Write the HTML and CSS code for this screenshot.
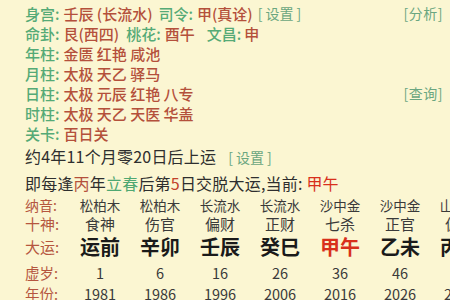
FILE: index.html
```html
<!DOCTYPE html>
<html lang="zh">
<head>
<meta charset="utf-8">
<link rel="stylesheet" href="styles.css">
</head>
<body>
<div class="page">
  <div class="info">
    <div class="line"><span class="lb">身宫:</span><span class="v">壬辰 (长流水)</span><span class="lb sp">司令:</span><span class="v">甲(真诠)</span><span class="link"><span class="bo">[</span>设置<span class="bc">]</span></span><span class="link right">[分析]</span></div>
    <div class="line"><span class="lb">命卦:</span><span class="v">艮(西四)</span><span class="lb sp2">桃花:</span><span class="v">酉午</span><span class="lb sp3">文昌:</span><span class="v">申</span></div>
    <div class="line"><span class="lb">年柱:</span><span class="v">金匮 红艳 咸池</span></div>
    <div class="line"><span class="lb">月柱:</span><span class="v">太极 天乙 驿马</span></div>
    <div class="line"><span class="lb">日柱:</span><span class="v">太极 元辰 红艳 八专</span><span class="link right">[查询]</span></div>
    <div class="line"><span class="lb">时柱:</span><span class="v">太极 天乙 天医 华盖</span></div>
    <div class="line"><span class="lb">关卡:</span><span class="v">百日关</span></div>
  </div>
  <div class="big">约4年11个月零20日后上运<span class="link sm"><span class="bo">[</span>设置<span class="bc">]</span></span></div>
  <div class="big">即每逢<span class="br">丙</span>年<span class="gr">立春</span>后第<span class="rd">5</span>日交脱大运,当前: <span class="cur">甲午</span></div>
  <div class="row r-ny">
    <span class="rl">纳音:</span><span>松柏木</span><span>松柏木</span><span>长流水</span><span>长流水</span><span>沙中金</span><span>沙中金</span><span>山下火</span>
  </div>
  <div class="row r-ss">
    <span class="rl">十神:</span><span>食神</span><span>伤官</span><span>偏财</span><span>正财</span><span>七杀</span><span>正官</span><span>偏印</span>
  </div>
  <div class="row r-dy">
    <span class="rl">大运:</span><span>运前</span><span>辛卯</span><span>壬辰</span><span>癸巳</span><span class="cur">甲午</span><span>乙未</span><span>丙申</span>
  </div>
  <div class="row r-xs">
    <span class="rl">虚岁:</span><span>1</span><span>6</span><span>16</span><span>26</span><span>36</span><span>46</span><span>56</span>
  </div>
  <div class="row r-nf">
    <span class="rl">年份:</span><span>1981</span><span>1986</span><span>1996</span><span>2006</span><span>2016</span><span>2026</span><span>2036</span>
  </div>
</div>
</body>
</html>
```

FILE: styles.css
```css
html, body {
  margin: 0;
  padding: 0;
  background: #fbf6d2;
  overflow: hidden;
}
body {
  width: 450px;
  height: 300px;
  font-family: "Noto Sans CJK SC", "Noto Sans", sans-serif;
}
.page {
  padding: 3px 0 0 25px;
}
.info .line {
  display: flex;
  align-items: center;
  height: 20px;
  font-size: 15px;
  font-weight: 500;
  white-space: nowrap;
}
.lb {
  color: #55aa76;
  margin-right: 4px;
}
.lb.sp { margin-left: 6px; }
.lb.sp2 { margin-left: 7px; }
.lb.sp3 { margin-left: 12px; margin-right: 3px; }
.v {
  color: #b4503b;
}
.link {
  color: #6aa680;
  margin-left: 5px;
  font-weight: 400;
  font-size: 14px;
}
.bo { margin-right: 3px; }
.bc { margin-left: 3px; }
.link.right {
  margin-left: auto;
  margin-right: 7px;
  letter-spacing: 0.5px;
}
.big {
  font-size: 16px;
  line-height: 26px;
  color: #2e2e2e;
  white-space: nowrap;
  letter-spacing: 0.2px;
}
.link.sm {
  font-size: 14px;
  margin-left: 12px;
  letter-spacing: 0;
}
.br { color: #b4503b; }
.gr { color: #4fa872; }
.rd { color: #c2412b; }
.cur { color: #d8301c; }
.row {
  display: grid;
  grid-template-columns: 45px repeat(7, 60px);
  white-space: nowrap;
  color: #3a3a3a;
}
.row > span {
  text-align: center;
}
.row > .rl {
  text-align: left;
  color: #b5563f;
}
.r-ny { font-size: 13.5px; line-height: 18px; }
.r-ny .rl { font-size: 14px; }
.r-ss { font-size: 15px; line-height: 20px; }
.r-ss .rl { font-size: 15px; }
.r-dy { font-size: 20px; line-height: 26px; font-weight: bold; color: #1a1a1a; }
.r-dy .rl { font-size: 15px; font-weight: normal; color: #b5563f; }
.r-dy .cur { color: #d8301c; }
.r-xs { font-size: 14.5px; line-height: 26px; }
.r-nf { font-size: 14.5px; line-height: 16px; }
```
